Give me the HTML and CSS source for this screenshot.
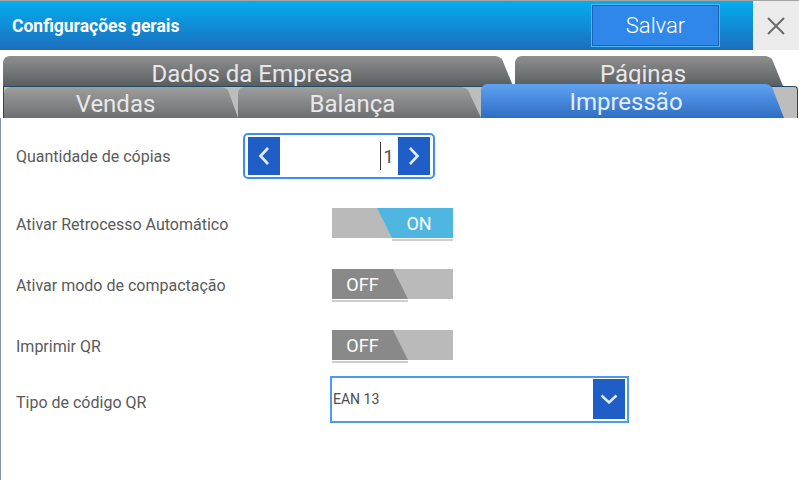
FILE: index.html
```html
<!DOCTYPE html>
<html lang="pt">
<head>
<meta charset="utf-8">
<title>Configurações gerais</title>
<link rel="stylesheet" href="styles.css">
</head>
<body>
<div class="app">
  <header class="header">
    <div class="bar">
      <h1 class="title">Configurações gerais</h1>
      <button class="save">Salvar</button>
    </div>
    <button class="close" aria-label="Fechar">
      <svg width="18" height="18" viewBox="0 0 18 18"><path d="M1 1L17 17M17 1L1 17" stroke="#6a6a6a" stroke-width="2" fill="none"/></svg>
    </button>
  </header>

  <nav class="tabs">
    <div class="tab-row row-top">
      <div class="tab tab-dark tab-dados">Dados da Empresa</div>
      <div class="tab tab-dark tab-paginas">Páginas</div>
    </div>
    <div class="tab-row row-bottom">
      <div class="tab tab-mid tab-vendas">Vendas</div>
      <div class="tab tab-mid tab-balanca">Balança</div>
      <div class="tab tab-active tab-impressao">Impressão</div>
    </div>
  </nav>

  <main class="content">
    <div class="field field-spin">
      <span class="label">Quantidade de cópias</span>
      <div class="spinner">
        <button class="spin-btn"><svg width="12" height="20" viewBox="0 0 12 20"><path d="M10 2L2.5 10L10 18" stroke="#e3ecf9" stroke-width="2.6" fill="none"/></svg></button>
        <div class="spin-value"><span class="caret"></span>1</div>
        <button class="spin-btn"><svg width="12" height="20" viewBox="0 0 12 20"><path d="M2 2L9.5 10L2 18" stroke="#e3ecf9" stroke-width="2.6" fill="none"/></svg></button>
      </div>
    </div>

    <div class="field field-toggle field-first">
      <span class="label">Ativar Retrocesso Automático</span>
      <div class="switch switch-on">
        <div class="track"><span class="knob">ON</span></div>
        <div class="line"></div>
      </div>
    </div>

    <div class="field field-toggle">
      <span class="label">Ativar modo de compactação</span>
      <div class="switch switch-off">
        <div class="track"><span class="knob">OFF</span></div>
        <div class="line"></div>
      </div>
    </div>

    <div class="field field-toggle">
      <span class="label">Imprimir QR</span>
      <div class="switch switch-off">
        <div class="track"><span class="knob">OFF</span></div>
        <div class="line"></div>
      </div>
    </div>

    <div class="field field-select">
      <span class="label">Tipo de código QR</span>
      <div class="select">
        <span class="select-text">EAN 13</span>
        <span class="select-btn"><svg width="18" height="10" viewBox="0 0 18 10"><path d="M1.5 1.5L9 8.5L16.5 1.5" stroke="#e3ecf9" stroke-width="2.4" fill="none"/></svg></span>
      </div>
    </div>
  </main>
</div>
</body>
</html>
```

FILE: styles.css
```css
* { box-sizing: border-box; }

html, body {
  margin: 0;
  padding: 0;
  background: #ffffff;
}

body {
  width: 799px;
  height: 480px;
  overflow: hidden;
  font-family: Roboto, "Noto Sans", "Liberation Sans", sans-serif;
}

.app {
  width: 799px;
  height: 480px;
  display: flex;
  flex-direction: column;
}

/* Header */
.header {
  display: flex;
  height: 50px;
  border-top: 1px solid #a4a4a4;
  flex: none;
}

.bar {
  flex: 1;
  display: flex;
  align-items: flex-start;
  background: linear-gradient(#03aeee, #1d6dbf);
}

.title {
  flex: 1;
  margin: 0;
  padding-left: 12px;
  align-self: center;
  font-size: 17.5px;
  font-weight: 700;
  color: #ffffff;
}

.save {
  width: 129px;
  height: 43px;
  margin: 3px 33px 0 0;
  border: 1px solid #53b4f6;
  box-shadow: inset 0 0 0 1px #1b63b6;
  background: #2f87e9;
  color: #ffffff;
  font-family: Roboto, sans-serif;
  font-weight: 300;
  font-size: 22px;
  padding: 0;
}

.close {
  width: 46px;
  height: 49px;
  border: 0;
  padding: 0;
  background: #ebebeb;
  display: flex;
  align-items: center;
  justify-content: center;
}

/* Tabs */
.tabs {
  flex: none;
}

.tab-row {
  display: flex;
}

.row-top {
  margin-top: 6px;
  padding-left: 3px;
  gap: 2px;
  height: 30px;
}

.row-bottom {
  margin-left: 3px;
  width: 795px;
  height: 32px;
  border: 1px solid #1f4b64;
  border-bottom: 0;
  border-top-right-radius: 4px;
  background: #bdbdbd;
}

.tab {
  --s: 12px;
  flex: none;
  height: 30px;
  padding: 4px var(--s) 0 0;
  text-align: center;
  font-size: 24px;
  line-height: 28px;
  color: #e8e8e8;
  white-space: nowrap;
  overflow: hidden;
  clip-path: polygon(0 100%, 0 6px, 1px 3px, 3px 1px, 6px 0,
    calc(100% - var(--s) - 5px) 0, calc(100% - var(--s) - 2px) 1px,
    calc(100% - var(--s) + 1px) 3px, 100% 100%);
}

.tab-dark {
  background: linear-gradient(#8f8f8f, #5a5e60);
}

.tab-mid {
  height: 31px;
  padding-top: 3px;
  background: linear-gradient(#9e9e9e, #6c6f72);
}

.tab-active {
  height: 34px;
  margin-top: -3px;
  padding-top: 4px;
  background: linear-gradient(#5fa2f1, #2d6ec4);
  color: #e4eefb;
}

.tab-dados { width: 510px; }
.tab-paginas { width: 268px; }
.tab-vendas { width: 234px; --s: 11px; }
.tab-balanca { width: 243px; --s: 14px; }
.tab-impressao { width: 303px; --s: 13px; }

/* Content */
.content {
  flex: 1;
  border-left: 1px solid #8394aa;
  padding: 15px 0 0 15px;
}

.field {
  display: flex;
  align-items: center;
}

.label {
  flex: none;
  font-size: 16px;
  color: #5a5a5a;
}

.field-spin .label { width: 227px; }
.field-toggle .label { width: 316px; }
.field-select .label { width: 314px; margin-top: 6px; }

.field-toggle { margin-top: 28px; }
.field-first { margin-top: 29px; }
.field-select { margin-top: 13px; }

/* Spinner */
.spinner {
  display: flex;
  width: 192px;
  height: 46px;
  border: 2px solid #3c8ff0;
  border-radius: 5px;
  padding: 2px 3px;
}

.spin-btn {
  width: 32px;
  border: 0;
  padding: 0;
  background: #1f5ec6;
  display: flex;
  align-items: center;
  justify-content: center;
}

.spin-value {
  flex: 1;
  display: flex;
  align-items: center;
  justify-content: flex-end;
  padding-right: 4px;
  font-size: 19px;
  color: #555555;
}

.caret {
  width: 1px;
  height: 28px;
  margin-right: 2px;
  background: #3a3a3a;
}

/* Switches */
.switch {
  display: flex;
  flex-direction: column;
  width: 121px;
}

.track {
  display: flex;
  height: 30px;
  background: #bababa;
}

.knob {
  width: 76px;
  height: 30px;
  display: flex;
  align-items: center;
  justify-content: center;
  color: #ffffff;
  font-size: 18px;
}

.switch-on .knob {
  margin-left: 45px;
  padding-left: 8px;
  background: #4eb6e1;
  clip-path: polygon(0 0, 100% 0, 100% 100%, 15px 100%);
}

.switch-off .knob {
  padding-right: 15px;
  background: #898989;
  clip-path: polygon(0 0, 61px 0, 100% 100%, 0 100%);
}

.line {
  height: 2px;
  margin-top: 1px;
  background: #cdcdcd;
}

.switch-on .line { margin-left: 60px; }
.switch-off .line { width: 76px; }

/* Select */
.select {
  display: flex;
  align-items: center;
  width: 299px;
  height: 47px;
  border: 2px solid #4b9bf2;
  padding: 1px 2px 2px 1px;
}

.select-text {
  flex: 1;
  font-size: 14px;
  color: #4d4d4d;
}

.select-btn {
  width: 32px;
  align-self: stretch;
  background: #1f5ec6;
  display: flex;
  align-items: center;
  justify-content: center;
}
```
